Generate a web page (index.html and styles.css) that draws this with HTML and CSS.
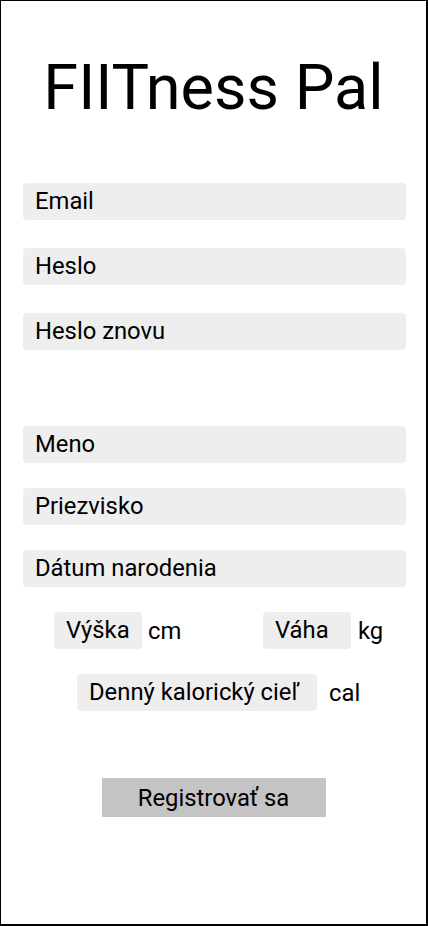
FILE: index.html
```html
<!DOCTYPE html>
<html lang="sk">
<head>
<meta charset="utf-8">
<title>FIITness Pal</title>
<link rel="stylesheet" href="styles.css">
</head>
<body>
<div class="screen">
  <h1 class="title">FIITness Pal</h1>
  <div class="group group-account">
    <div class="field">Email</div>
    <div class="field">Heslo</div>
    <div class="field">Heslo znovu</div>
  </div>
  <div class="group group-person">
    <div class="field">Meno</div>
    <div class="field">Priezvisko</div>
    <div class="field">Dátum narodenia</div>
    <div class="row row-body">
      <div class="pair pair-height">
        <div class="chip chip-small">Výška</div>
        <span class="unit">cm</span>
      </div>
      <div class="pair">
        <div class="chip chip-small">Váha</div>
        <span class="unit unit-kg">kg</span>
      </div>
    </div>
    <div class="row row-goal">
      <div class="chip chip-wide">Denný kalorický cieľ</div>
      <span class="unit unit-cal">cal</span>
    </div>
  </div>
  <div class="actions">
    <button class="btn">Registrovať sa</button>
  </div>
</div>
</body>
</html>
```
FILE: styles.css
```css
* { box-sizing: border-box; }
html, body { margin: 0; padding: 0; background: #fff; }
body { font-family: Roboto, "Noto Sans", sans-serif; color: #000; }

.screen {
  width: 428px;
  height: 926px;
  border-top: 1px solid #000;
  border-left: 1px solid #000;
  border-right: 2px solid #000;
  border-bottom: 2px solid #000;
  display: flex;
  flex-direction: column;
}

.title {
  margin: 49px 0 0;
  font-weight: 400;
  font-size: 63px;
  line-height: 76px;
  text-align: center;
  letter-spacing: 0;
}

.group {
  display: flex;
  flex-direction: column;
  padding: 0 20px 0 22px;
}
.group-account { margin-top: 57px; gap: 28px; }
.group-person { margin-top: 76px; gap: 25px; }

.field {
  height: 37px;
  background: #eeeeee;
  border-radius: 4px;
  padding: 0 12px;
  font-size: 23.8px;
  line-height: 37px;
}

.row { display: flex; align-items: center; font-size: 23.8px; }
.row-body { padding-left: 31px; }
.pair { display: flex; align-items: center; }
.pair-height { width: 209px; }
.chip {
  height: 37px;
  line-height: 37px;
  background: #eeeeee;
  border-radius: 4px;
  padding: 0 12px;
}
.chip-small { width: 88px; }
.chip-wide { width: 240px; margin-left: 54px; }
.unit { margin-left: 6px; }
.unit-kg { margin-left: 7px; }
.unit-cal { margin-left: 12px; }

.actions { display: flex; justify-content: center; margin-top: 67px; }
.btn {
  width: 224px;
  height: 39px;
  border: 0;
  border-radius: 0;
  background: #c4c4c4;
  font-family: Roboto, "Noto Sans", sans-serif;
  font-size: 23.8px;
  color: #000;
  padding: 0;
}
```
